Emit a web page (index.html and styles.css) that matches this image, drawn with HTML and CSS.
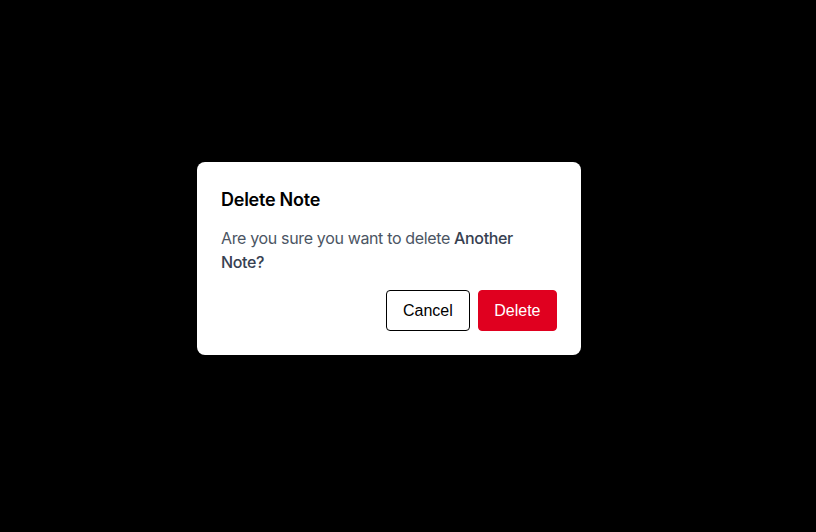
FILE: index.html
```html
<!DOCTYPE html>
<html>
<head>
<meta charset="utf-8">
<link rel="stylesheet" href="styles.css">
</head>
<body>
<div class="dialog">
  <h2 class="title">Delete Note</h2>
  <p class="message">Are you sure you want to delete <strong>Another Note?</strong></p>
  <div class="actions">
    <button class="btn btn-cancel">Cancel</button>
    <button class="btn btn-delete">Delete</button>
  </div>
</div>
</body>
</html>
```
FILE: styles.css
```css
html, body {
  margin: 0;
  padding: 0;
  background: #000;
  height: 100%;
}
body {
  font-family: Inter, "Noto Sans", sans-serif;
}
.dialog {
  box-sizing: border-box;
  width: 384px;
  margin: 162px 0 0 197px;
  background: #fff;
  border-radius: 8px;
  padding: 24px;
}
.title {
  margin: 0;
  font-size: 18px;
  line-height: 28px;
  font-weight: 600;
  letter-spacing: -0.25px;
  color: #000;
}
.message {
  margin: 12px 0 0;
  font-size: 16px;
  line-height: 24px;
  letter-spacing: -0.35px;
  color: #4b5563;
}
.message strong {
  font-weight: 500;
  color: #374151;
}
.actions {
  display: flex;
  justify-content: flex-end;
  gap: 8px;
  margin-top: 16px;
}
.btn {
  font-family: "Liberation Sans", Arial, sans-serif;
  font-size: 16px;
  height: 41px;
  padding: 0 16px;
  border-radius: 4px;
  cursor: pointer;
}
.btn-cancel {
  background: #fff;
  color: #000;
  border: 1px solid #000;
}
.btn-delete {
  padding: 0 15.5px;
  background: #e0001f;
  color: #fff;
  border: 1px solid #e0001f;
}
```
